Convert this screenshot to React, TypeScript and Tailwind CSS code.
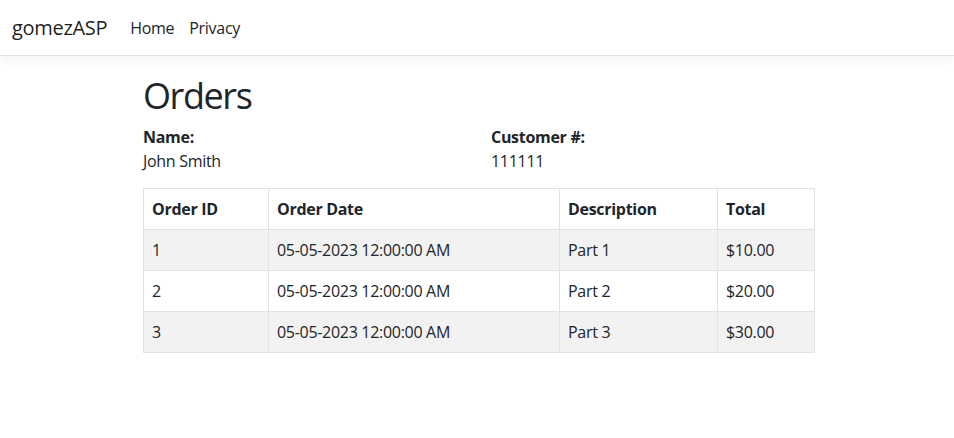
import React from "react";

const rows = [
  { id: "1", date: "05-05-2023 12:00:00 AM", desc: "Part 1", total: "$10.00" },
  { id: "2", date: "05-05-2023 12:00:00 AM", desc: "Part 2", total: "$20.00" },
  { id: "3", date: "05-05-2023 12:00:00 AM", desc: "Part 3", total: "$30.00" },
];

export default function App() {
  return (
    <div className="min-h-screen bg-white text-[#212529] text-[16px] leading-6 tracking-[-0.3px]" style={{ fontFamily: '"Open Sans", "Noto Sans", sans-serif' }}>
      <nav className="h-[56px] border-b border-[#dee2e6] shadow-[0_4px_12px_rgba(0,0,0,0.05)] flex items-center px-3 pt-[1px]">
        <span className="text-[20px] text-black/90 mr-[23px]">gomezASP</span>
        <div className="flex gap-[15px]">
          <span>Home</span>
          <span>Privacy</span>
        </div>
      </nav>
      <main className="pl-[143px] pt-[18px]">
        <h1 className="text-[36px] leading-[43px] font-normal tracking-[-1.4px] mb-[8px]">Orders</h1>
        <div className="flex w-[696px] mb-[15px]">
          <div className="w-[348px]">
            <div className="font-bold">Name:</div>
            <div>John Smith</div>
          </div>
          <div className="w-[348px]">
            <div className="font-bold">Customer #:</div>
            <div>111111</div>
          </div>
        </div>
        <table className="border-collapse w-[672px]">
          <thead>
            <tr className="h-[41px]">
              <th className="border border-[#dee2e6] text-left font-bold px-2 w-[125px]">Order ID</th>
              <th className="border border-[#dee2e6] text-left font-bold px-2 w-[291px]">Order Date</th>
              <th className="border border-[#dee2e6] text-left font-bold px-2 w-[158px]">Description</th>
              <th className="border border-[#dee2e6] text-left font-bold px-2">Total</th>
            </tr>
          </thead>
          <tbody>
            {rows.map((r, i) => (
              <tr key={r.id} className={i % 2 === 0 ? "h-[41px] bg-[#f2f2f2]" : "h-[41px] bg-white"}>
                <td className="border border-[#dee2e6] px-2">{r.id}</td>
                <td className="border border-[#dee2e6] px-2">{r.date}</td>
                <td className="border border-[#dee2e6] px-2">{r.desc}</td>
                <td className="border border-[#dee2e6] px-2">{r.total}</td>
              </tr>
            ))}
          </tbody>
        </table>
      </main>
    </div>
  );
}
